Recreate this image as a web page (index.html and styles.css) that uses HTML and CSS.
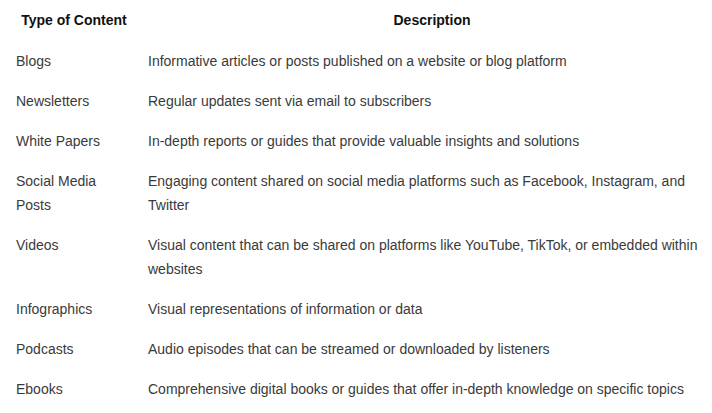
FILE: index.html
```html
<!DOCTYPE html>
<html>
<head>
<meta charset="utf-8">
<link rel="stylesheet" href="styles.css">
</head>
<body>
<table class="content-table">
  <colgroup><col class="col-type"><col class="col-desc"></colgroup>
  <thead>
    <tr><th>Type of Content</th><th>Description</th></tr>
  </thead>
  <tbody>
    <tr><td>Blogs</td><td>Informative articles or posts published on a website or blog platform</td></tr>
    <tr><td>Newsletters</td><td>Regular updates sent via email to subscribers</td></tr>
    <tr><td>White Papers</td><td>In-depth reports or guides that provide valuable insights and solutions</td></tr>
    <tr><td>Social Media Posts</td><td>Engaging content shared on social media platforms such as Facebook, Instagram, and Twitter</td></tr>
    <tr><td>Videos</td><td>Visual content that can be shared on platforms like YouTube, TikTok, or embedded within websites</td></tr>
    <tr><td>Infographics</td><td>Visual representations of information or data</td></tr>
    <tr><td>Podcasts</td><td>Audio episodes that can be streamed or downloaded by listeners</td></tr>
    <tr><td>Ebooks</td><td>Comprehensive digital books or guides that offer in-depth knowledge on specific topics</td></tr>
  </tbody>
</table>
</body>
</html>
```
FILE: styles.css
```css
html, body {
  margin: 0;
  padding: 0;
  background: #fff;
  overflow: hidden;
}
.content-table {
  margin-left: 8px;
  width: 716px;
  border-collapse: collapse;
  table-layout: fixed;
  font-family: "Liberation Sans", Arial, sans-serif;
  font-size: 14px;
  line-height: 24px;
}
.col-type { width: 132px; }
.col-desc { width: 584px; }
.content-table th {
  padding: 8px 8px 9px;
  font-weight: bold;
  color: #111;
  text-align: center;
}
.content-table td {
  padding: 8px 22px 8px 8px;
  color: #3a3a3a;
  text-align: left;
  vertical-align: top;
}
.content-table td:first-child {
  padding-right: 8px;
}
```
